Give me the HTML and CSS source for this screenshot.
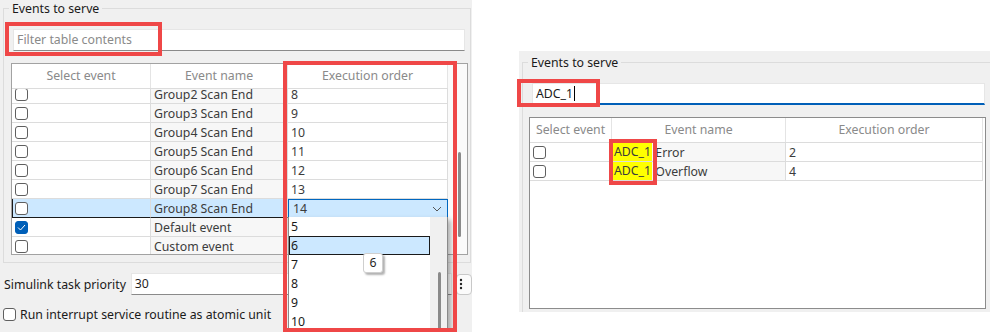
FILE: index.html
```html
<!DOCTYPE html>
<html lang="en">
<head>
    <meta charset="UTF-8">
    <title>Events to serve</title>
    <link rel="stylesheet" href="styles.css">
</head>
<body>

<div class="page">

    <section class="panel panel-main">
        <div class="group">
            <div class="group-title">Events to serve</div>
            <div class="filter placeholder">Filter table contents</div>
            <div class="table">
                <div class="grid">
                    <div class="thead">
                        <div class="th">Select event</div>
                        <div class="th">Event name</div>
                        <div class="th">Execution order</div>
                    </div>
                    <div class="tbody">
                        <div class="rows rows-scrolled">
                            <div class="tr"><div class="td td-check"><span class="cb"></span></div><div class="td td-name">Group2 Scan End</div><div class="td">8</div></div>
                            <div class="tr"><div class="td td-check"><span class="cb"></span></div><div class="td td-name">Group3 Scan End</div><div class="td">9</div></div>
                            <div class="tr"><div class="td td-check"><span class="cb"></span></div><div class="td td-name">Group4 Scan End</div><div class="td">10</div></div>
                            <div class="tr"><div class="td td-check"><span class="cb"></span></div><div class="td td-name">Group5 Scan End</div><div class="td">11</div></div>
                            <div class="tr"><div class="td td-check"><span class="cb"></span></div><div class="td td-name">Group6 Scan End</div><div class="td">12</div></div>
                            <div class="tr"><div class="td td-check"><span class="cb"></span></div><div class="td td-name">Group7 Scan End</div><div class="td">13</div></div>
                            <div class="tr is-selected">
                                <div class="td td-check"><span class="cb"></span></div>
                                <div class="td td-name">Group8 Scan End</div>
                                <div class="td combo">
                                    <span>14</span>
                                    <svg width="10" height="6" viewBox="0 0 10 6"><path d="M1 1 L5 5 L9 1" fill="none" stroke="#555" stroke-width="1"/></svg>
                                </div>
                            </div>
                            <div class="tr"><div class="td td-check"><span class="cb checked"><svg width="9" height="7" viewBox="0 0 9 7"><path d="M1 3.5 L3.5 6 L8 1" fill="none" stroke="#fff" stroke-width="1"/></svg></span></div><div class="td td-name">Default event</div><div class="td">5</div></div>
                            <div class="tr"><div class="td td-check"><span class="cb"></span></div><div class="td td-name">Custom event</div><div class="td">6</div></div>
                        </div>
                    </div>
                </div>
                <div class="vscroll"><div class="thumb"></div></div>
            </div>
        </div>

        <div class="field-row">
            <span class="field-label">Simulink task priority</span>
            <div class="text-field">30</div>
            <div class="more-btn">
                <svg width="4" height="12" viewBox="0 0 4 12"><circle cx="2" cy="2" r="1.2" fill="#222"/><circle cx="2" cy="6" r="1.2" fill="#222"/><circle cx="2" cy="10" r="1.2" fill="#222"/></svg>
            </div>
        </div>

        <div class="check-row">
            <span class="cb"></span>
            <span>Run interrupt service routine as atomic unit</span>
        </div>
    </section>

    <section class="panel panel-filtered">
        <div class="group">
            <div class="group-title">Events to serve</div>
            <div class="filter filter-active">ADC_1<span class="caret"></span></div>
            <div class="table table-dark">
                <div class="grid grid-wide">
                    <div class="thead">
                        <div class="th">Select event</div>
                        <div class="th">Event name</div>
                        <div class="th">Execution order</div>
                    </div>
                    <div class="tbody">
                        <div class="rows">
                            <div class="tr"><div class="td td-check"><span class="cb"></span></div><div class="td td-name td-hit"><span class="hit">ADC_1</span>&nbsp;Error</div><div class="td">2</div></div>
                            <div class="tr"><div class="td td-check"><span class="cb"></span></div><div class="td td-name td-hit"><span class="hit">ADC_1</span>&nbsp;Overflow</div><div class="td">4</div></div>
                        </div>
                    </div>
                </div>
            </div>
        </div>
    </section>

    <!-- open drop-down of the selected row -->
    <div class="dropdown">
        <div class="dropdown-list">
            <div class="option">5</div>
            <div class="option is-current">6</div>
            <div class="option">7</div>
            <div class="option">8</div>
            <div class="option">9</div>
            <div class="option">10</div>
        </div>
        <div class="dropdown-scroll"><div class="thumb thumb-dd"></div></div>
    </div>
    <div class="tooltip">6</div>

    <!-- annotation boxes -->
    <div class="mark mark-filter"></div>
    <div class="mark mark-column"></div>
    <div class="mark mark-query"></div>
    <div class="mark mark-hits"></div>

</div>

</body>
</html>
```

FILE: styles.css
```css
* {
    box-sizing: border-box;
}

body {
    margin: 0;
    background-color: #fff;
    font-family: "Noto Sans", "Segoe UI", sans-serif;
    font-size: 12.3px;
    color: #1f1f1f;
}

.page {
    position: relative;
    display: flex;
    align-items: flex-start;
    width: 990px;
    height: 332px;
    overflow: hidden;
}

.panel {
    background-color: #f0f0f0;
    overflow: hidden;
}

.panel-main {
    width: 472px;
    height: 332px;
    padding: 8px 0 0 3px;
}

.panel-filtered {
    width: 471px;
    height: 261px;
    margin: 51px 0 0 47px;
    padding: 11px 0 0 3px;
}

.group {
    width: 468px;
    height: 255px;
    border: 1px solid #dcdcdc;
}

.panel-filtered .group {
    width: 490px;
    height: 300px;
}

.group-title {
    display: table;
    margin: -8px 0 0 5px;
    padding: 0 3px;
    line-height: 16px;
    background-color: #f0f0f0;
    color: #1a1a1a;
}

.filter {
    width: 452px;
    height: 22px;
    margin: 12px 0 0 9px;
    padding-left: 3px;
    line-height: 20px;
    background-color: #fff;
    border: 1px solid #e6e6e6;
    border-bottom-color: #8a8a8a;
}

.placeholder {
    color: #8a8a8a;
}

.filter-active {
    width: 453px;
    border-bottom: 2px solid #005fb8;
    color: #1a1a1a;
}

.caret {
    display: inline-block;
    width: 1px;
    height: 15px;
    margin-left: 1px;
    vertical-align: -3px;
    background-color: #000;
}

/* table */

.table {
    display: flex;
    width: 457px;
    height: 192px;
    margin: 12px 0 0 7px;
    background-color: #fff;
    border: 1px solid #a2a2a2;
}

.panel-filtered .table {
    margin-left: 6px;
}

.table-dark {
    border-color: #8c8c8c;
}

.grid {
    display: flex;
    flex-direction: column;
    width: 436px;
}

.grid-wide {
    width: 453px;
}

.thead,
.tr {
    display: grid;
    grid-template-columns: 139px 137px 160px;
}

.grid-wide .thead,
.grid-wide .tr {
    grid-template-columns: 82px 174px 197px;
}

.thead {
    height: 25px;
    border-bottom: 1px solid #dcdcdc;
}

.th {
    line-height: 24px;
    text-align: center;
    color: #8a8a8a;
    border-right: 1px solid #e4e4e4;
}

.tbody {
    flex: 1;
    overflow: hidden;
}

.rows-scrolled {
    margin-top: -4px;
}

.tr {
    height: 19px;
}

.td {
    display: flex;
    align-items: center;
    padding-left: 3px;
    color: #3c3c3c;
    border-right: 1px solid #dcdcdc;
    border-bottom: 1px solid #dcdcdc;
    white-space: nowrap;
}

.td-name {
    background-color: #f7f7f7;
}

.td-hit {
    padding-left: 1px;
}

.hit {
    height: 18px;
    padding: 0 1px;
    line-height: 18px;
    background-color: #ffff00;
}

.is-selected .td-check,
.is-selected .td-name {
    background-color: #cce8ff;
    border-bottom-color: #1a1a1a;
}

.is-selected .td-check {
    box-shadow: inset 1px 0 0 #1a1a1a;
}

.combo {
    justify-content: space-between;
    padding: 0 5px 0 4px;
    background-color: #cce8ff;
    border: 1px solid #0067c0;
}

.vscroll {
    flex: 1;
    padding: 88px 0 0 10px;
    background-color: #fafafa;
}

.thumb {
    width: 3px;
    height: 85px;
    border-radius: 2px;
    background-color: #8a8a8a;
}

/* check boxes */

.cb {
    display: inline-flex;
    align-items: center;
    justify-content: center;
    width: 13px;
    height: 13px;
    border: 1px solid #5f5f5f;
    border-radius: 3px;
    background-color: #fff;
}

.cb.checked {
    border-color: #005fb8;
    background-color: #005fb8;
}

/* fields below the group */

.field-row {
    display: flex;
    align-items: center;
    height: 22px;
    margin: 10px 0 0 1px;
}

.field-label {
    width: 129px;
    color: #1a1a1a;
}

.text-field {
    width: 327px;
    height: 22px;
    padding-left: 3px;
    line-height: 20px;
    background-color: #fff;
    border: 1px solid #e6e6e6;
    border-bottom-color: #8a8a8a;
}

.more-btn {
    flex-shrink: 0;
    display: flex;
    align-items: center;
    width: 16px;
    height: 21px;
    margin-left: 4px;
    padding-left: 2px;
    border: 1px solid #c8c8c8;
    border-radius: 4px;
    background-color: #fbfbfb;
}

.check-row {
    display: flex;
    align-items: center;
    gap: 4px;
    height: 18px;
    margin-top: 10px;
    color: #1a1a1a;
}

/* drop-down list and tooltip lie over the table */

.dropdown {
    position: absolute;
    left: 288px;
    top: 217px;
    display: flex;
    width: 160px;
    height: 130px;
    background-color: #fff;
    border: 1px solid #8a8a8a;
    border-top: none;
    box-shadow: 3px 3px 5px rgba(0, 0, 0, 0.3);
}

.dropdown-list {
    flex: 1;
}

.option {
    height: 19px;
    padding-left: 2px;
    line-height: 19px;
    color: #1a1a1a;
}

.option.is-current {
    background-color: #cce8ff;
    border: 1px solid #1a1a1a;
    padding-left: 1px;
    line-height: 17px;
}

.dropdown-scroll {
    width: 17px;
    padding: 55px 0 0 8px;
    background-color: #f0f0f0;
}

.thumb-dd {
    height: 70px;
}

.tooltip {
    position: absolute;
    left: 363px;
    top: 253px;
    width: 20px;
    height: 20px;
    line-height: 18px;
    text-align: center;
    background-color: #fff;
    border: 1px solid #cfcfcf;
    border-radius: 3px;
    box-shadow: 2px 2px 2px rgba(0, 0, 0, 0.3);
}

/* red annotation boxes */

.mark {
    position: absolute;
    border: 4px solid #ef4747;
}

.mark-filter {
    left: 5px;
    top: 22px;
    width: 157px;
    height: 34px;
}

.mark-column {
    left: 283px;
    top: 61px;
    width: 174px;
    height: 271px;
}

.mark-query {
    left: 517px;
    top: 79px;
    width: 83px;
    height: 28px;
}

.mark-hits {
    left: 609px;
    top: 139px;
    width: 48px;
    height: 46px;
}
```
